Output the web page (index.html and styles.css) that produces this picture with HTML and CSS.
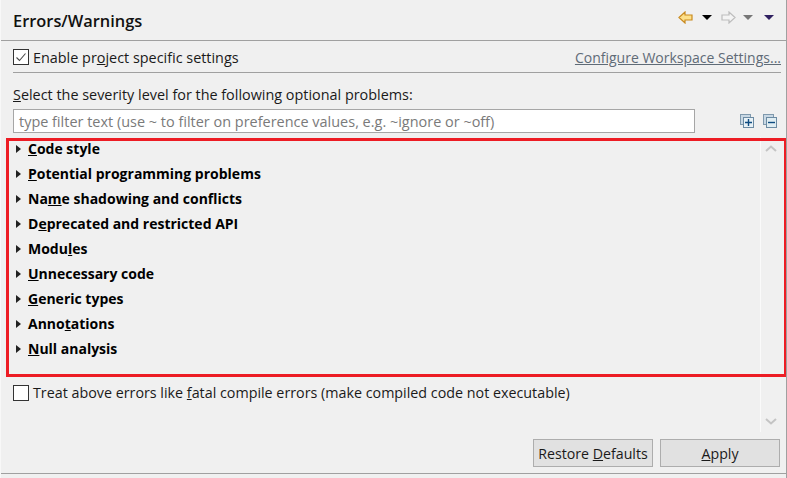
FILE: index.html
```html
<!DOCTYPE html>
<html lang="en">
<head>
    <meta charset="UTF-8">
    <title>Errors/Warnings</title>
    <link rel="stylesheet" href="styles.css">
</head>
<body>
    <div class="page">
        <div class="title-bar">
            <h1>Errors/Warnings</h1>
            <div class="nav-icons">
                <svg width="15" height="13" viewBox="0 0 15 13"><path d="M1 6.5 7 1v3h7v5H7v3z" fill="#fde08a" stroke="#c98a1e" stroke-width="1.2"/></svg>
                <span class="arrow-down black"></span>
                <svg class="nav-forward" width="15" height="13" viewBox="0 0 15 13"><path d="M14 6.5 8 1v3H1v5h7v3z" fill="#f4f4f4" stroke="#bdbdbd" stroke-width="1.2"/></svg>
                <span class="arrow-down gray"></span>
                <span class="arrow-down purple"></span>
            </div>
        </div>

        <div class="enable-row">
            <label class="check-label">
                <span class="checkbox">
                    <svg width="14" height="14" viewBox="0 0 14 14"><path d="M2.5 7.5 5.5 10.5 11.5 3.5" fill="none" stroke="#4a4a4a" stroke-width="1.1"/></svg>
                </span>
                <span>Enable pr<u>o</u>ject specific settings</span>
            </label>
            <a class="config-link">Configure Workspace Settings...</a>
        </div>

        <p class="severity-label"><u>S</u>elect the severity level for the following optional problems:</p>

        <div class="filter-row">
            <div class="filter-input">type filter text (use ~ to filter on preference values, e.g. ~ignore or ~off)</div>
            <div class="tree-icons">
                <svg width="14" height="14" viewBox="0 0 14 14"><rect x=".5" y=".5" width="10" height="10" fill="#c9d8e4" stroke="#7f99ad"/><rect x="3.5" y="3.5" width="10" height="10" fill="#e8f1f6" stroke="#6c8ba3"/><path d="M8.5 5v7M5 8.5h7" stroke="#0f4c81" stroke-width="1.4"/></svg>
                <svg width="14" height="14" viewBox="0 0 14 14"><rect x=".5" y=".5" width="10" height="10" fill="#c9d8e4" stroke="#7f99ad"/><rect x="3.5" y="3.5" width="10" height="10" fill="#e0edf2" stroke="#6c8ba3"/><path d="M5 8.5h7" stroke="#0f4c81" stroke-width="1.4"/></svg>
            </div>
        </div>

        <div class="scroll-area">
            <div class="scroll-main">
                <ul class="tree">
                    <li class="tree-row"><u>C</u>ode style</li>
                    <li class="tree-row"><u>P</u>otential programming problems</li>
                    <li class="tree-row">Na<u>m</u>e shadowing and conflicts</li>
                    <li class="tree-row">D<u>e</u>precated and restricted API</li>
                    <li class="tree-row">Modu<u>l</u>es</li>
                    <li class="tree-row"><u>U</u>nnecessary code</li>
                    <li class="tree-row"><u>G</u>eneric types</li>
                    <li class="tree-row">Anno<u>t</u>ations</li>
                    <li class="tree-row"><u>N</u>ull analysis</li>
                </ul>
                <label class="check-label fatal-row">
                    <span class="checkbox"></span>
                    <span>Treat above errors like <u>f</u>atal compile errors (make compiled code not executable)</span>
                </label>
            </div>
            <div class="scrollbar">
                <svg width="12" height="7" viewBox="0 0 12 7"><path d="M1 6 6 1.5 11 6" fill="none" stroke="#c4c4c4" stroke-width="2"/></svg>
                <svg width="12" height="7" viewBox="0 0 12 7"><path d="M1 1 6 5.5 11 1" fill="none" stroke="#c4c4c4" stroke-width="2"/></svg>
            </div>
        </div>

        <div class="button-row">
            <button class="btn"><span>Restore <u>D</u>efaults</span></button>
            <button class="btn"><span><u>A</u>pply</span></button>
        </div>

        <div class="highlight"></div>
    </div>
</body>
</html>
```

FILE: styles.css
```css
* { margin: 0; padding: 0; box-sizing: border-box; }
body {
    font-family: "Open Sans", "Noto Sans", sans-serif;
    font-size: 14.4px;
    color: #1a1a1a;
    background: #f0f0f0;
}
.page {
    position: relative;
    width: 787px;
    height: 478px;
    overflow: hidden;
    background: #f0f0f0;
    border-left: 1px solid #f8f8f8;
    border-right: 1px solid #a0a0a0;
}
.title-bar {
    height: 41px;
    display: flex;
    align-items: center;
    justify-content: space-between;
    padding: 1px 12px 0 12px;
    border-bottom: 1px solid #a0a0a0;
}
.title-bar h1 { font-size: 16.4px; font-weight: 600; color: #111; }
.nav-icons { display: flex; align-items: center; align-self: flex-start; margin-top: 10px; }
.nav-forward { margin: 0 7px 0 9px; }
.arrow-down {
    width: 0;
    height: 0;
    margin-left: 9px;
    border-left: 5px solid transparent;
    border-right: 5px solid transparent;
    border-top: 5px solid #000;
}
.arrow-down.gray { border-top-color: #777; margin-left: 0; }
.arrow-down.purple { border-top-color: #2f2060; margin-left: 11px; }
.nav-forward + .arrow-down { margin-left: 0; }
.enable-row {
    height: 32px;
    padding-top: 1px;
    margin: 0 5px 0 12px;
    display: flex;
    align-items: center;
    justify-content: space-between;
    border-bottom: 1px solid #a0a0a0;
}
.check-label { display: flex; align-items: center; gap: 4px; }
.checkbox {
    width: 16px;
    height: 16px;
    border: 1px solid #333;
    background: #fff;
    display: flex;
    align-items: center;
    justify-content: center;
}
.config-link { font-size: 14px; color: #5f6b77; text-decoration: underline; }
.severity-label { margin: 12px 0 0 12px; height: 24px; line-height: 19px; }
.filter-row {
    display: flex;
    align-items: center;
    padding: 0 9px 0 12px;
    justify-content: space-between;
    height: 24px;
}
.filter-input {
    width: 682px;
    height: 24px;
    line-height: 23px;
    padding-left: 5px;
    font-size: 14.46px;
    border: 1px solid #a6a6a6;
    background: #fff;
    color: #7a7a7a;
}
.tree-icons { display: flex; gap: 9px; }
.scroll-area {
    height: 295px;
    margin-top: 4px;
    display: flex;
    padding-right: 5px;
}
.scroll-main { flex: 1; }
.tree { list-style: none; height: 225px; }
.tree-row {
    position: relative;
    height: 25px;
    line-height: 24px;
    padding-left: 27px;
    font-size: 14px;
    font-weight: 700;
    color: #000;
}
.tree-row::before {
    content: "";
    position: absolute;
    left: 15px;
    top: 8px;
    border-top: 4px solid transparent;
    border-bottom: 4px solid transparent;
    border-left: 5px solid #222;
}
.fatal-row { margin: 21px 0 0 12px; font-size: 14.3px; }
.scrollbar {
    width: 21px;
    border-left: 1px solid #fafafa;
    display: flex;
    flex-direction: column;
    align-items: center;
    justify-content: space-between;
    padding: 8px 0 7px;
}
.button-row {
    display: flex;
    justify-content: flex-end;
    gap: 7px;
    padding-right: 6px;
    margin-top: 7px;
    height: 35px;
    border-bottom: 1px solid #a0a0a0;
}
.btn {
    width: 120px;
    height: 28px;
    font: inherit;
    font-size: 14.2px;
    color: #1a1a1a;
    background: #e1e1e1;
    border: 1px solid #adadad;
}
.highlight {
    position: absolute;
    left: 5px;
    top: 138px;
    width: 781px;
    height: 239px;
    border: 3px solid #ed1c24;
    pointer-events: none;
}
```
